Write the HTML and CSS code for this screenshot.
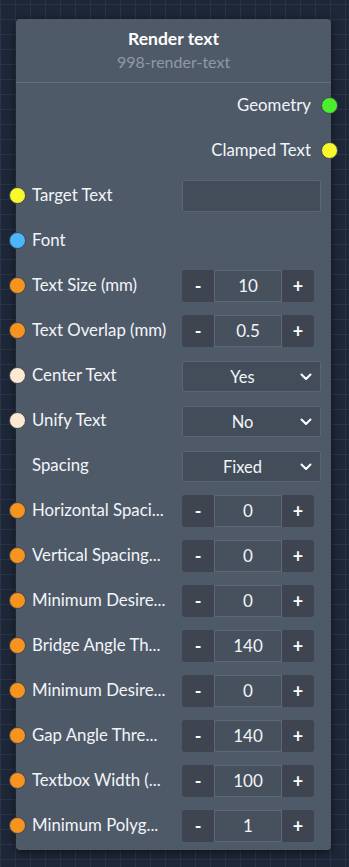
FILE: index.html
```html
<!DOCTYPE html>
<html lang="en">
<head>
    <meta charset="UTF-8">
    <meta name="viewport" content="width=device-width, initial-scale=1.0">
    <title>Render text</title>
    <link rel="stylesheet" href="styles.css">
</head>
<body>
    <div class="canvas">
        <div class="node">
            <div class="node-header">
                <div class="node-title">Render text</div>
                <div class="node-id">998-render-text</div>
            </div>

            <div class="row output">
                <span class="label">Geometry</span>
                <span class="dot out green"></span>
            </div>
            <div class="row output">
                <span class="label">Clamped Text</span>
                <span class="dot out yellow"></span>
            </div>

            <div class="row">
                <span class="dot in yellow"></span>
                <span class="label">Target Text</span>
                <input type="text" class="text-input">
            </div>
            <div class="row">
                <span class="dot in blue"></span>
                <span class="label">Font</span>
            </div>
            <div class="row">
                <span class="dot in orange"></span>
                <span class="label">Text Size (mm)</span>
                <div class="stepper"><button>-</button><span class="value">10</span><button>+</button></div>
            </div>
            <div class="row">
                <span class="dot in orange"></span>
                <span class="label">Text Overlap (mm)</span>
                <div class="stepper"><button>-</button><span class="value">0.5</span><button>+</button></div>
            </div>
            <div class="row">
                <span class="dot in cream"></span>
                <span class="label">Center Text</span>
                <div class="select">Yes<svg class="chevron" viewBox="0 0 12 8" width="12" height="8"><path d="M1.5 1.5 L6 6 L10.5 1.5" fill="none" stroke="#fff" stroke-width="2" stroke-linecap="round" stroke-linejoin="round"/></svg></div>
            </div>
            <div class="row">
                <span class="dot in cream"></span>
                <span class="label">Unify Text</span>
                <div class="select">No<svg class="chevron" viewBox="0 0 12 8" width="12" height="8"><path d="M1.5 1.5 L6 6 L10.5 1.5" fill="none" stroke="#fff" stroke-width="2" stroke-linecap="round" stroke-linejoin="round"/></svg></div>
            </div>
            <div class="row">
                <span class="label">Spacing</span>
                <div class="select">Fixed<svg class="chevron" viewBox="0 0 12 8" width="12" height="8"><path d="M1.5 1.5 L6 6 L10.5 1.5" fill="none" stroke="#fff" stroke-width="2" stroke-linecap="round" stroke-linejoin="round"/></svg></div>
            </div>
            <div class="row">
                <span class="dot in orange"></span>
                <span class="label" title="Horizontal Spacing (mm)">Horizontal Spaci...</span>
                <div class="stepper"><button>-</button><span class="value">0</span><button>+</button></div>
            </div>
            <div class="row">
                <span class="dot in orange"></span>
                <span class="label" title="Vertical Spacing (mm)">Vertical Spacing...</span>
                <div class="stepper"><button>-</button><span class="value">0</span><button>+</button></div>
            </div>
            <div class="row">
                <span class="dot in orange"></span>
                <span class="label" title="Minimum Desired Bridge">Minimum Desire...</span>
                <div class="stepper"><button>-</button><span class="value">0</span><button>+</button></div>
            </div>
            <div class="row">
                <span class="dot in orange"></span>
                <span class="label" title="Bridge Angle Threshold">Bridge Angle Th...</span>
                <div class="stepper"><button>-</button><span class="value">140</span><button>+</button></div>
            </div>
            <div class="row">
                <span class="dot in orange"></span>
                <span class="label" title="Minimum Desired Gap">Minimum Desire...</span>
                <div class="stepper"><button>-</button><span class="value">0</span><button>+</button></div>
            </div>
            <div class="row">
                <span class="dot in orange"></span>
                <span class="label" title="Gap Angle Threshold">Gap Angle Thre...</span>
                <div class="stepper"><button>-</button><span class="value">140</span><button>+</button></div>
            </div>
            <div class="row">
                <span class="dot in orange"></span>
                <span class="label" title="Textbox Width (mm)">Textbox Width (...</span>
                <div class="stepper"><button>-</button><span class="value">100</span><button>+</button></div>
            </div>
            <div class="row">
                <span class="dot in orange"></span>
                <span class="label" title="Minimum Polygon Area">Minimum Polyg...</span>
                <div class="stepper"><button>-</button><span class="value">1</span><button>+</button></div>
            </div>
        </div>
    </div>
</body>
</html>
```

FILE: styles.css
```css
html, body {
    margin: 0;
    padding: 0;
}

body {
    font-family: Lato, "Open Sans", sans-serif;
    background-color: #1e2738;
    background-image:
        linear-gradient(#2a3447 1px, transparent 1px),
        linear-gradient(90deg, #2a3447 1px, transparent 1px);
    background-size: 15px 15px;
    background-position: 0 4px;
    color: #f2f5f8;
    height: 867px;
    overflow: hidden;
}

.canvas {
    padding: 19px 18px 0 16px;
}

.node {
    width: 315px;
    background-color: #4f5a69;
    border-radius: 4px;
    box-shadow: 0 2px 8px rgba(0,0,0,0.55);
    padding-bottom: 2px;
}

.node-header {
    text-align: center;
    padding-top: 9px;
    height: 54px;
    border-bottom: 1px solid #64707f;
}

.node-title {
    font-weight: bold;
    font-size: 17.5px;
    line-height: 22px;
    color: #ffffff;
}

.node-id {
    font-size: 16px;
    line-height: 20px;
    margin-top: 2px;
    color: #8e99a6;
}

.row {
    position: relative;
    display: flex;
    align-items: center;
    height: 45px;
    padding: 0 10px 0 16px;
}

.row.output {
    justify-content: flex-end;
    padding-right: 20px;
}

.label {
    flex: 1;
    min-width: 0;
    font-size: 16.8px;
    white-space: nowrap;
    overflow: hidden;
    text-overflow: ellipsis;
    margin-right: 6px;
    padding-bottom: 2px;
}

.row.output .label {
    flex: none;
    margin-right: 0;
}

.dot {
    position: absolute;
    top: 50%;
    width: 15px;
    height: 15px;
    margin-top: -9px;
    border-radius: 50%;
    border: 1px solid #3b4452;
}

.dot.in {
    left: -7px;
}

.dot.out {
    right: -7px;
}

.green { background-color: #4bef2b; }
.yellow { background-color: #f8f82c; }
.blue { background-color: #4cb6fb; }
.orange { background-color: #f7941f; }
.cream { background-color: #fde9d2; }

.text-input {
    width: 139px;
    height: 32px;
    box-sizing: border-box;
    margin: 0;
    background-color: #434d5a;
    border: 1px solid #5c6776;
    border-radius: 2px;
}

.stepper {
    display: flex;
    width: 132px;
    height: 32px;
    margin-right: 7px;
    background-color: #3e4550;
    border-radius: 3px;
}

.stepper button {
    width: 32px;
    border: none;
    background: transparent;
    color: #ffffff;
    font-family: inherit;
    font-weight: bold;
    font-size: 18px;
    padding: 0;
}

.value {
    flex: 1;
    display: flex;
    align-items: center;
    justify-content: center;
    background-color: #47515d;
    border: 1px solid #5d6877;
    font-size: 17px;
}

.select {
    position: relative;
    width: 139px;
    height: 31px;
    box-sizing: border-box;
    margin-top: 2px;
    padding-right: 18px;
    display: flex;
    align-items: center;
    justify-content: center;
    background-color: #434d5a;
    border: 1px solid #5a6574;
    border-radius: 2px;
    font-size: 16.5px;
}

.chevron {
    position: absolute;
    right: 8px;
    top: 11px;
}
```
